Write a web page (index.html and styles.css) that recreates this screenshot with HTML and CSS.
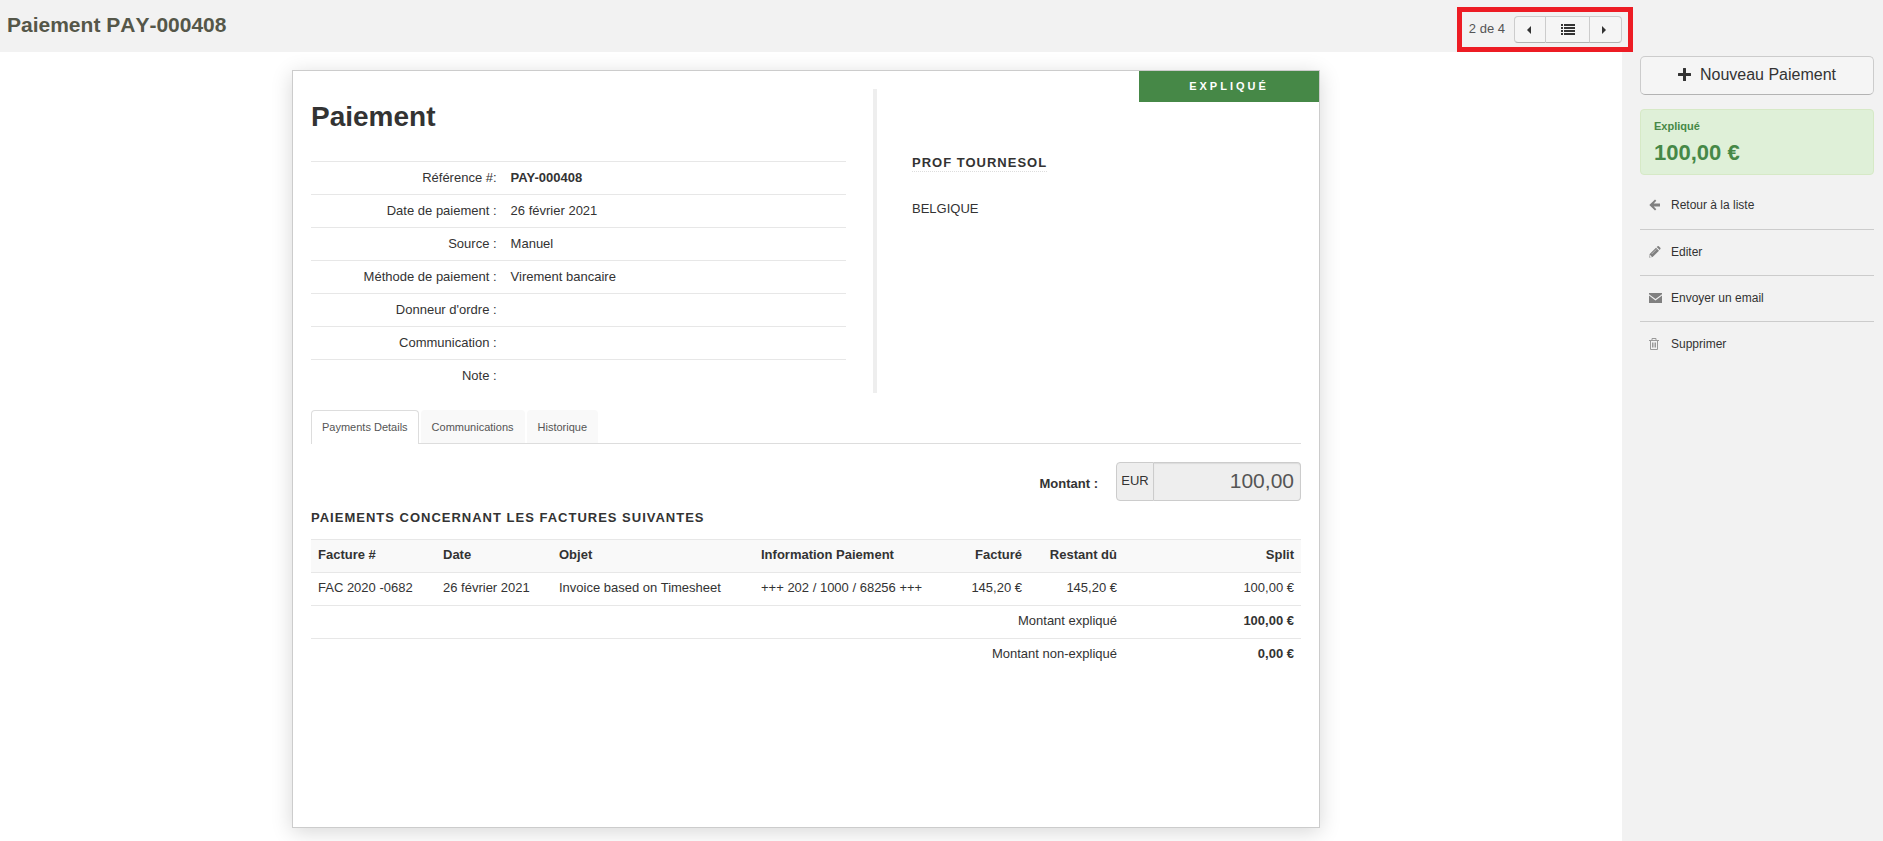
FILE: index.html
```html
<!DOCTYPE html>
<html lang="fr">
<head>
<meta charset="utf-8">
<title>Paiement PAY-000408</title>
<link rel="stylesheet" href="styles.css">
</head>
<body>
<header class="topbar">
  <h1 class="topbar-title">Paiement PAY-000408</h1>
  <div class="pager">
    <span class="pager-label">2 de 4</span>
    <div class="btn-group">
      <button class="btn btn-side" aria-label="Précédent"><svg width="4" height="8" viewBox="0 0 4 8"><path d="M4 0v8L0 4z"/></svg></button>
      <button class="btn btn-list" aria-label="Liste"><svg width="14" height="11" viewBox="0 0 14 11"><path d="M0 0h2v2H0zM3 0h11v2H3zM0 3h2v2H0zM3 3h11v2H3zM0 6h2v2H0zM3 6h11v2H3zM0 9h2v2H0zM3 9h11v2H3z"/></svg></button>
      <button class="btn btn-side" aria-label="Suivant"><svg width="4" height="8" viewBox="0 0 4 8"><path d="M0 0v8l4-4z"/></svg></button>
    </div>
    <span class="highlight"></span>
  </div>
</header>
<div class="layout">
  <main class="main">
    <article class="sheet">
      <span class="ribbon">EXPLIQUÉ</span>
      <div class="summary">
        <section class="summary-left">
          <h2 class="sheet-title">Paiement</h2>
          <table class="facts">
            <tr><th scope="row">Référence #:</th><td><strong>PAY-000408</strong></td></tr>
            <tr><th scope="row">Date de paiement :</th><td>26 février 2021</td></tr>
            <tr><th scope="row">Source :</th><td>Manuel</td></tr>
            <tr><th scope="row">Méthode de paiement :</th><td>Virement bancaire</td></tr>
            <tr><th scope="row">Donneur d'ordre :</th><td></td></tr>
            <tr><th scope="row">Communication :</th><td></td></tr>
            <tr><th scope="row">Note :</th><td></td></tr>
          </table>
        </section>
        <section class="summary-right">
          <a class="client" href="#">PROF TOURNESOL</a>
          <p class="country">BELGIQUE</p>
        </section>
      </div>
      <nav class="tabs">
        <a class="tab tab-active" href="#">Payments Details</a>
        <a class="tab" href="#">Communications</a>
        <a class="tab" href="#">Historique</a>
      </nav>
      <div class="amount">
        <label class="amount-label" for="amount">Montant :</label>
        <div class="input-group">
          <span class="addon">EUR</span>
          <input class="amount-input" id="amount" type="text" value="100,00" readonly>
        </div>
      </div>
      <h3 class="section-title">PAIEMENTS CONCERNANT LES FACTURES SUIVANTES</h3>
      <table class="invoices">
        <colgroup><col class="c-num"><col class="c-date"><col class="c-object"><col class="c-info"><col class="c-billed"><col class="c-due"><col class="c-split"></colgroup>
        <thead>
          <tr><th>Facture #</th><th>Date</th><th>Objet</th><th>Information Paiement</th><th class="num">Facturé</th><th class="num">Restant dû</th><th class="num">Split</th></tr>
        </thead>
        <tbody>
          <tr><td>FAC 2020 -0682</td><td>26 février 2021</td><td>Invoice based on Timesheet</td><td>+++ 202 / 1000 / 68256 +++</td><td class="num">145,20 €</td><td class="num">145,20 €</td><td class="num">100,00 €</td></tr>
          <tr><td class="num" colspan="6">Montant expliqué</td><td class="num"><strong>100,00 €</strong></td></tr>
          <tr><td class="num" colspan="6">Montant non-expliqué</td><td class="num"><strong>0,00 €</strong></td></tr>
        </tbody>
      </table>
    </article>
  </main>
  <aside class="sidebar">
    <button class="btn-new"><svg width="13" height="13" viewBox="0 0 13 13"><path d="M5 .5Q5 0 5.500 0h2Q8 0 8 .5V5h4.500q.5 0 .5.5v2q0 .5-.5.5H8v4.500q0 .5-.5.5h-2q-.5 0-.5-.5V8H.5Q0 8 0 7.500v-2Q0 5 .5 5H5z"/></svg>Nouveau Paiement</button>
    <div class="status">
      <span class="status-label">Expliqué</span>
      <span class="status-amount">100,00 €</span>
    </div>
    <nav class="menu">
      <a class="menu-item" href="#"><svg width="14" height="12" viewBox="0 0 14 12"><path d="M6 .5 7.300 1.800 4.700 4.500H11v3H4.700l2.600 2.700L6 11.500.3 6z"/></svg>Retour à la liste</a>
      <a class="menu-item" href="#"><svg width="14" height="12" viewBox="0 0 14 12"><path d="M0 11.500.7 8 7 1.700l3 3L3.600 11zM7.700 1 8.600.2q.6-.4 1.200.1l1.500 1.500q.5.600.1 1.200l-.7.900z"/><path d="M1 9.200l1.500 1.500-1 .3-.8-.8zM2.700 8l4.600-4.600" fill="#f2f2f2" stroke="#f2f2f2" stroke-width=".5"/></svg>Editer</a>
      <a class="menu-item" href="#"><svg width="14" height="12" viewBox="0 0 14 12"><path d="M0 1h13v1.200L6.500 7 0 2.200zM0 3.600l6.500 4.900L13 3.600V11H0z"/></svg>Envoyer un email</a>
      <a class="menu-item" href="#"><svg class="icon-light" width="14" height="12" viewBox="0 0 14 12"><path d="M0 2.500h10M3 2V.5h4V2M1.500 2.500v9h7v-9M3.500 4.500v5M5 4.500v5M6.500 4.500v5"/></svg>Supprimer</a>
    </nav>
  </aside>
</div>
</body>
</html>
```
FILE: styles.css
```css
* { box-sizing: border-box; }
body {
  margin: 0;
  min-height: 100vh;
  display: flex;
  flex-direction: column;
  background: #fff;
  color: #333;
  font: 13px/18px "Liberation Sans", Arial, sans-serif;
}
h1, h2, h3, p { margin: 0; }
a { color: inherit; text-decoration: none; }
button, input { font: inherit; color: inherit; margin: 0; }
button { cursor: pointer; }
table { border-collapse: collapse; width: 100%; }
svg { fill: currentColor; flex: none; }

.topbar {
  display: flex;
  justify-content: space-between;
  align-items: flex-start;
  height: 52px;
  padding: 7px 261px 0 7px;
  background: #f2f2f2;
}
.topbar-title { font-size: 21px; line-height: 36px; font-kerning: none; color: #555749; }
.pager { position: relative; display: flex; gap: 9px; padding-top: 9px; }
.pager-label { line-height: 26px; color: #555; }
.btn-group { display: flex; }
.btn {
  display: flex;
  align-items: center;
  justify-content: center;
  height: 27px;
  padding: 0;
  border: 1px solid #ccc;
  border-bottom-color: #b3b3b3;
  background: #f5f5f5;
}
.btn + .btn { border-left: 0; }
.btn:first-child { border-radius: 4px 0 0 4px; }
.btn:last-child { border-radius: 0 4px 4px 0; }
.btn-side { width: 32px; padding-right: 3px; }
.btn-list { width: 44px; }
.highlight {
  position: absolute;
  top: 0;
  bottom: -9px;
  left: -12px;
  right: -11px;
  border: 5px solid #ed1c24;
  pointer-events: none;
}

.layout { flex: 1; display: flex; }
.main { flex: 1; padding: 18px 10px 12px 0; }
.sheet {
  position: relative;
  max-width: 1028px;
  min-height: 758px;
  margin: 0 auto;
  padding: 18px;
  background: #fff;
  border: 1px solid #ccc;
  box-shadow: 0 4px 20px rgba(0, 0, 0, .16);
}
.ribbon {
  position: absolute;
  top: 0;
  right: 0;
  width: 180px;
  background: #468847;
  color: #fff;
  font-size: 11px;
  font-weight: bold;
  line-height: 31px;
  letter-spacing: 3px;
  text-align: center;
}
.summary { display: flex; }
.summary-left { flex: 0 1 562px; padding-right: 27px; }
.summary-right { flex: 1; padding: 65px 0 0 35px; border-left: 4px solid #eee; }
.sheet-title { padding: 10px 0 26px; font-size: 28px; line-height: 36px; }
.facts th, .facts td { height: 33px; padding: 0 7px 1px; border-top: 1px solid #e7e7e7; font-weight: normal; }
.facts th { width: 36%; text-align: right; }
.client {
  display: inline-block;
  border-bottom: 1px dotted #ddd;
  font-weight: bold;
  line-height: 17px;
  letter-spacing: 1px;
}
.country { padding-top: 28px; }

.tabs { display: flex; gap: 2px; margin-top: 17px; border-bottom: 1px solid #ddd; }
.tab {
  padding: 0 10px;
  border: 1px solid #f9f9f9;
  border-bottom: 0;
  border-radius: 4px 4px 0 0;
  background: #f9f9f9;
  color: #555;
  font-size: 11px;
  line-height: 32px;
}
.tab-active { margin-bottom: -1px; border-color: #ddd; background: #fff; }

.amount { display: flex; justify-content: flex-end; gap: 18px; padding: 18px 0 3px; }
.amount-label { font-weight: bold; line-height: 44px; }
.input-group { display: flex; width: 185px; height: 39px; }
.addon {
  width: 38px;
  border: 1px solid #ccc;
  border-radius: 4px 0 0 4px;
  background: #eee;
  line-height: 36px;
  text-align: center;
}
.amount-input {
  flex: 1;
  min-width: 0;
  padding: 0 6px;
  border: 1px solid #ccc;
  border-left: 0;
  border-radius: 0 4px 4px 0;
  background: #eee;
  box-shadow: inset 0 1px 1px rgba(0, 0, 0, .08);
  color: #555;
  font-size: 21px;
  text-align: right;
}
.section-title { padding-bottom: 12px; font-size: 13px; line-height: 18px; letter-spacing: 1px; }
.invoices { table-layout: fixed; }
.invoices th, .invoices td { height: 33px; padding: 0 7px 1px; border-top: 1px solid #e7e7e7; text-align: left; white-space: nowrap; }
.invoices thead { background: #f9f9f9; }
.invoices .num { text-align: right; }
.c-num { width: 125px; }
.c-date { width: 116px; }
.c-object { width: 202px; }
.c-info { width: 195px; }
.c-billed { width: 80px; }
.c-due { width: 95px; }
.c-split { width: 177px; }

.sidebar { width: 261px; padding: 4px 9px 0 18px; background: #f2f2f2; }
.btn-new {
  display: flex;
  align-items: center;
  justify-content: center;
  gap: 9px;
  width: 100%;
  height: 39px;
  margin-bottom: 14px;
  padding: 0 0 2px;
  border: 1px solid #ccc;
  border-bottom-color: #b3b3b3;
  border-radius: 5px;
  background: #f5f5f5;
  font-size: 16px;
}
.status {
  height: 66px;
  padding: 7px 13px;
  border: 1px solid #d6e9c6;
  border-radius: 4px;
  background: #dff0d8;
  color: #468847;
  font-weight: bold;
}
.status-label, .status-amount { display: block; }
.status-label { font-size: 11px; line-height: 18px; }
.status-amount { font-size: 22px; line-height: 36px; }
.menu { margin-top: 8px; font-size: 12px; }
.menu-item { display: flex; align-items: center; gap: 8px; height: 46px; padding: 0 0 2px 9px; color: #333; }
.menu-item + .menu-item { border-top: 1px solid #ccc; }
.menu-item svg { color: #808080; }
.icon-light { fill: none; stroke: #999; }
```
